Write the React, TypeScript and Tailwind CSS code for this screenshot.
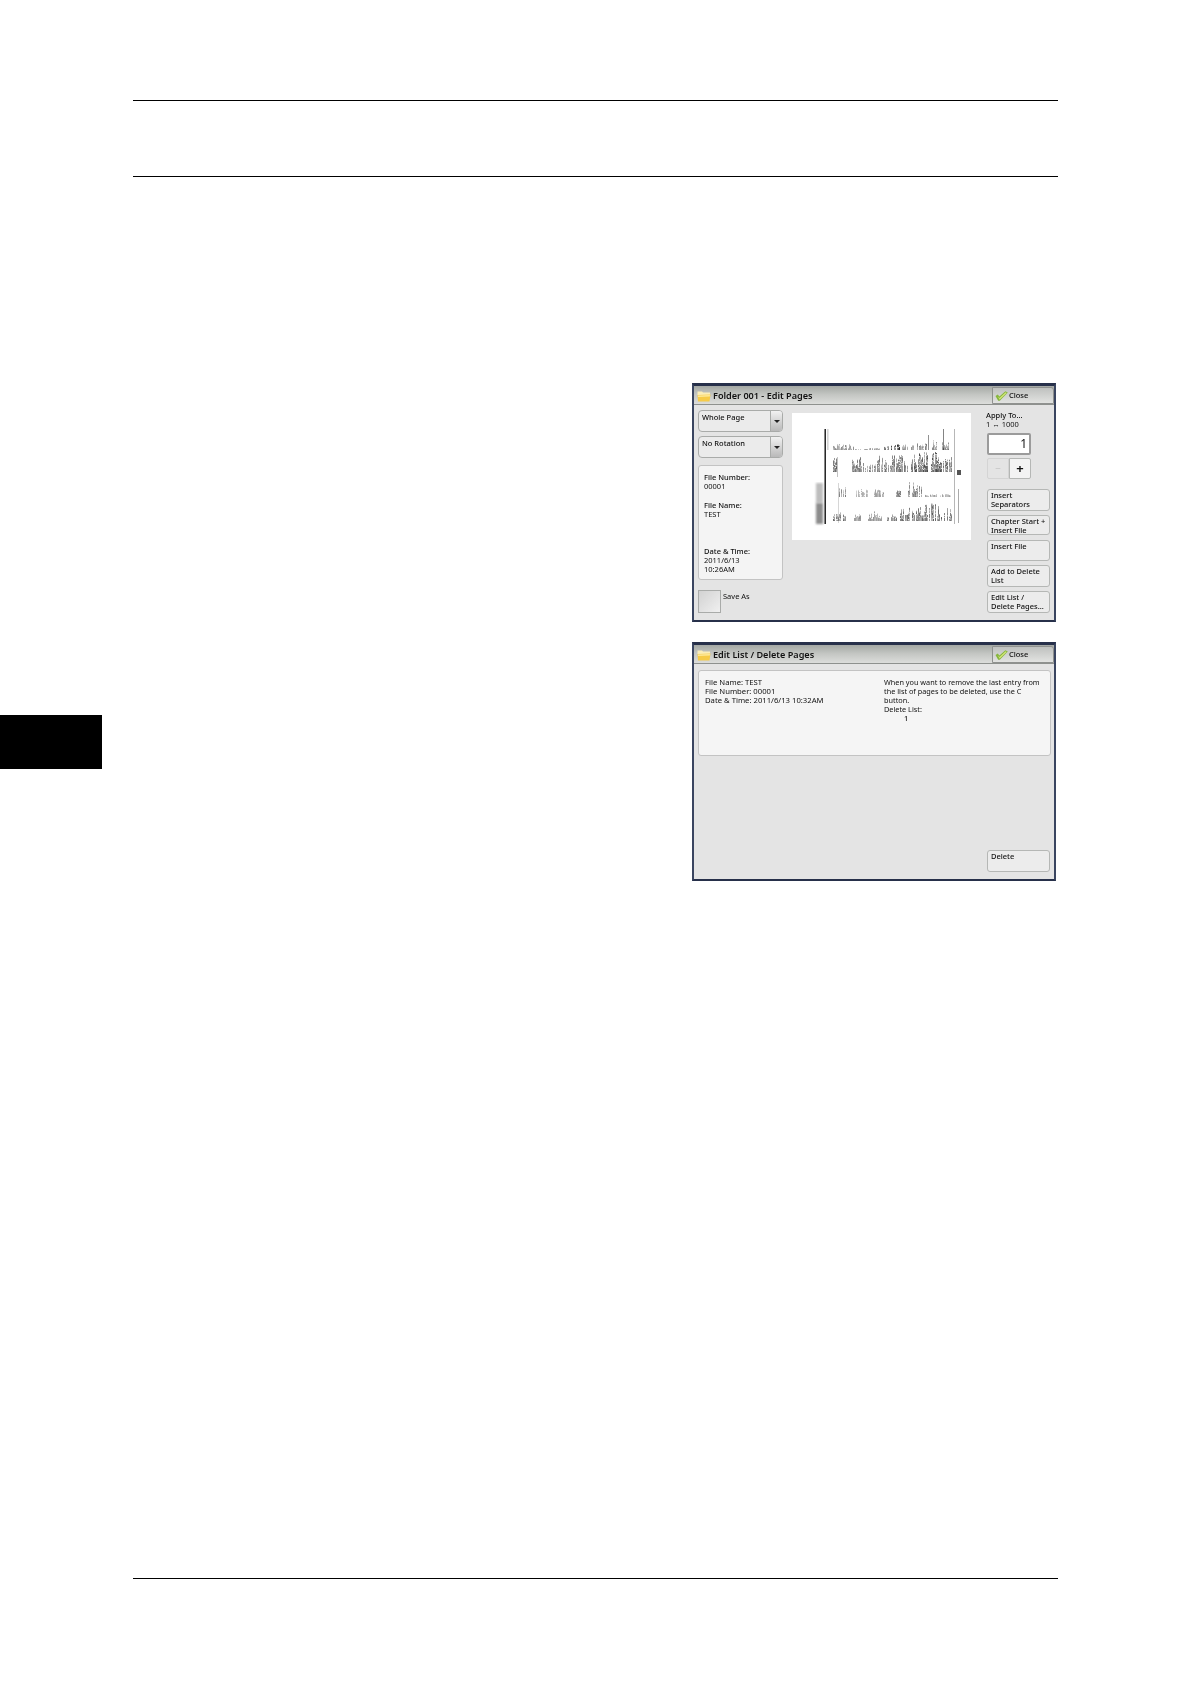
const font = "font-['Noto_Sans',sans-serif]";

function FolderIcon() {
  return (
    <svg width="14" height="11" viewBox="0 0 14 11" className="shrink-0">
      <path d="M0.5 2 L0.5 0.5 L5 0.5 L6 1.5 L13 1.5 L13 4 L0.5 4 Z" fill="#fbeeb8" />
      <path d="M0.5 4 L13.5 3.5 L12.5 10.5 L1 10.5 Z" fill="#f6cb48" />
      <path d="M1 4.5 L13 4 L12.8 5.5 L1 6 Z" fill="#fde99a" />
    </svg>
  );
}

function CheckIcon() {
  return (
    <svg width="13" height="10" viewBox="0 0 13 10" className="shrink-0">
      <path d="M0.5 5 L2.8 3.6 L4.4 5.4 L10.4 0.3 L12.8 1.6 L4.8 9.7 L3.2 9.7 Z" fill="#86b63c" />
      <path d="M2.6 5 L4.4 7 L10.6 1.3 L11.6 1.9 L4.6 8.8 Z" fill="#d2e57a" />
    </svg>
  );
}

function TitleBar({ title }: { title: string }) {
  return (
    <div className="flex h-[19px] items-start border-b border-[#8e918e] bg-gradient-to-b from-[#a4a8a4] via-[#c5c7c4] to-[#dcdddb]">
      <div className="ml-[3px] mt-[5px]">
        <FolderIcon />
      </div>
      <span className="ml-[2px] mt-[2px] text-[9.1px] font-semibold leading-[16px] text-[#111]">{title}</span>
      <div className="ml-auto mt-[1px] flex h-[17px] w-[62px] items-center rounded-tr-[3px] border border-[#8f918f] bg-gradient-to-b from-[#bfc1bf] to-[#e2e3e1] pl-[2px]">
        <CheckIcon />
        <span className="ml-[1px] text-[7.5px] font-medium text-[#111]">Close</span>
      </div>
    </div>
  );
}

function Dropdown({ label, className }: { label: string; className?: string }) {
  return (
    <div className={`flex h-[22px] w-[85px] overflow-hidden rounded-[4px] border border-[#a9aba9] bg-[#ebebeb] ${className ?? ""}`}>
      <span className="flex-1 pl-[3px] text-[7.5px] font-medium leading-[13px] text-[#111]">{label}</span>
      <div className="flex w-[12px] items-center justify-center border-l border-[#a9aba9] bg-gradient-to-b from-[#f2f2f2] to-[#b9b9b9]">
        <div className="h-0 w-0 border-x-[3px] border-t-[3px] border-x-transparent border-t-[#222]" />
      </div>
    </div>
  );
}

function SideButton({ lines, className }: { lines: string[]; className?: string }) {
  return (
    <div className={`w-[63px] rounded-[3px] border border-[#b5b7b5] bg-[#ececec] pl-[3px] pt-[1px] text-[7.5px] font-medium leading-[9px] text-[#111] ${className ?? ""}`}>
      {lines.map((line) => (
        <div key={line} className="whitespace-nowrap">
          {line}
        </div>
      ))}
    </div>
  );
}

// x0, x1, min height, max height, darkness
const rows: [number, [number, number, number, number, number][]][] = [
  [37, [[41, 62, 1, 7, 0.5], [62, 76, 1, 1, 0.4], [77, 88, 1, 2, 0.45], [92, 97, 2, 5, 0.6], [99, 108, 4, 6, 0.9], [110, 116, 2, 6, 0.5], [118, 122, 2, 5, 0.5], [125, 135, 2, 7, 0.55], [138, 146, 2, 12, 0.55], [150, 158, 2, 8, 0.6]]],
  [59, [[41, 46, 8, 15, 0.7], [60, 80, 4, 17, 0.6], [80, 100, 6, 18, 0.65], [100, 122, 6, 19, 0.65], [122, 150, 6, 20, 0.75], [150, 160, 8, 19, 0.65]]],
  [84, [[47, 55, 6, 14, 0.6], [64, 76, 4, 8, 0.35], [82, 92, 4, 8, 0.5], [102, 112, 3, 7, 0.6], [115, 130, 3, 15, 0.6], [133, 160, 1, 3, 0.4]]],
  [108, [[41, 55, 3, 9, 0.65], [62, 72, 2, 7, 0.5], [76, 90, 2, 10, 0.5], [95, 105, 3, 8, 0.6], [108, 132, 5, 15, 0.65], [132, 150, 4, 21, 0.7], [150, 160, 3, 13, 0.6]]],
];

function PreviewChart() {
  let seed = 17;
  const next = () => {
    seed = (seed * 1103515245 + 12345) & 0x7fffffff;
    return seed / 0x7fffffff;
  };
  const bars: { x: number; y: number; h: number; o: number }[] = [];
  rows.forEach(([base, clusters]) => {
    clusters.forEach(([x0, x1, minH, maxH, dark]) => {
      for (let x = x0; x < x1; x += 1) {
        if (next() < 0.25) continue;
        const total = minH + next() * (maxH - minH);
        // each column is broken into short dashes, like small print
        let y = base;
        while (y > base - total) {
          const h = Math.min(1 + next() * 3, y - (base - total));
          bars.push({ x, y: y - h, h, o: dark * (0.45 + next() * 0.55) });
          y -= h + (total > 4 && next() < 0.5 ? 0.8 : 0);
        }
      }
    });
  });
  return (
    <svg width="179" height="127" viewBox="0 0 179 127" className="block">
      <defs>
        <filter id="soft" x="-5%" y="-5%" width="110%" height="110%">
          <feGaussianBlur stdDeviation="0.3" />
        </filter>
        <filter id="softer" x="-30%" y="-5%" width="160%" height="110%">
          <feGaussianBlur stdDeviation="0.8" />
        </filter>
      </defs>
      <rect x="24" y="70" width="7" height="20" fill="#bdbdbd" filter="url(#softer)" />
      <rect x="24" y="90" width="7" height="21" fill="#8c8c8c" filter="url(#softer)" />
      <rect x="32.5" y="16" width="1.4" height="95" fill="#111" />
      <g filter="url(#soft)">
        <rect x="35.5" y="16" width="0.8" height="21" fill="#aaa" />
        <rect x="45" y="44" width="0.6" height="20" fill="#999" />
        <rect x="46" y="70" width="0.6" height="40" fill="#bbb" />
        <rect x="162" y="16" width="0.7" height="95" fill="#999" />
        <rect x="165" y="57" width="4" height="5" fill="#555" />
        <rect x="166" y="76" width="1" height="34" fill="#aaa" />
        <rect x="151" y="16" width="0.8" height="21" fill="#666" />
        <rect x="136" y="22" width="0.8" height="15" fill="#777" />
        {bars.map((b, i) => (
          <rect key={i} x={b.x} y={b.y} width="1" height={b.h} fill="#111" opacity={b.o} />
        ))}
      </g>
    </svg>
  );
}

function Window({ title, children }: { title: string; children: React.ReactNode }) {
  return (
    <div className="flex h-[239px] w-[364px] flex-col border-x-2 border-b-2 border-t-[3px] border-x-[#3a4560] border-b-[#27304a] border-t-[#27304a] bg-[#e4e4e4] blur-[0.25px]">
      <TitleBar title={title} />
      {children}
    </div>
  );
}

export default function App() {
  return (
    <div className={`flex h-[1684px] w-[1190px] bg-white ${font}`}>
      <div className="w-[102px] shrink-0 pt-[715px]">
        <div className="h-[54px] w-[102px] bg-black" />
      </div>

      <div className="ml-[31px] flex w-[925px] flex-col pt-[100px]">
        <div className="h-[76px] border-t border-black" />
        <div className="h-px bg-black" />

        <div className="ml-[559px] mt-[206px] flex w-[364px] flex-col gap-[20px]">
          <Window title="Folder 001 - Edit Pages">
            <div className="flex flex-1 pl-[4px] pt-[5px] text-[#111]">
              <div className="flex w-[85px] flex-col">
                <Dropdown label="Whole Page" />
                <Dropdown label="No Rotation" className="mt-[4px]" />
                <div className="mt-[7px] h-[115px] rounded-[3px] border border-[#c3c3c3] bg-[#f4f4f4] pl-[5px] pt-[7px] text-[7.5px] leading-[9.2px]">
                  <div className="font-medium">File Number:</div>
                  <div>00001</div>
                  <div className="mt-[9.2px] font-medium">File Name:</div>
                  <div>TEST</div>
                  <div className="mt-[27.6px] font-medium">Date &amp; Time:</div>
                  <div>2011/6/13</div>
                  <div>10:26AM</div>
                </div>
                <div className="mt-[10px] flex items-start">
                  <div className="h-[23px] w-[23px] border border-[#a9aba9] bg-gradient-to-br from-[#d2d2d2] to-[#f0f0f0]" />
                  <span className="ml-[2px] mt-[2px] text-[7.5px] leading-[9px]">Save As</span>
                </div>
              </div>

              <div className="ml-[9px] mt-[3px] h-[127px] w-[179px] bg-white">
                <PreviewChart />
              </div>

              <div className="ml-[16px] flex w-[64px] flex-col">
                <div className="-ml-px mt-[1px] text-[7.5px] font-medium leading-[9px]">
                  <div>Apply To...</div>
                  <div className="font-normal">1 ↔ 1000</div>
                </div>
                <div className="mt-[4px] flex h-[22px] w-[44px] items-center justify-end rounded-[2px] border-2 border-[#9b9b9b] bg-white pr-[2px] text-[12px] leading-none">
                  1
                </div>
                <div className="mt-[3px] flex h-[21px] w-[44px]">
                  <div className="flex w-[22px] items-center justify-center rounded-l-[2px] border border-[#d4d4d4] text-[10px] text-[#c4c4c4]">−</div>
                  <div className="flex w-[22px] items-center justify-center rounded-r-[2px] border border-[#b5b7b5] bg-[#f3f3f3] text-[13px] font-bold">+</div>
                </div>
                <SideButton lines={["Insert", "Separators"]} className="mt-[10px] h-[22px]" />
                <SideButton lines={["Chapter Start +", "Insert File"]} className="mt-[4px] h-[20px]" />
                <SideButton lines={["Insert File"]} className="mt-[5px] h-[21px]" />
                <SideButton lines={["Add to Delete", "List"]} className="mt-[4px] h-[22px]" />
                <SideButton lines={["Edit List /", "Delete Pages..."]} className="mt-[4px] h-[22px]" />
              </div>
            </div>
          </Window>

          <Window title="Edit List / Delete Pages">
            <div className="flex flex-1 flex-col pl-[4px] pr-[3px] pt-[6px] text-[#111]">
              <div className="flex h-[86px] rounded-[3px] border border-[#c3c3c3] bg-[#f5f5f5] pl-[6px] pt-[7px] leading-[9px]">
                <div className="w-[179px] text-[7.7px]">
                  <div>File Name: TEST</div>
                  <div>File Number: 00001</div>
                  <div>Date &amp; Time: 2011/6/13 10:32AM</div>
                </div>
                <div className="w-[160px] text-[7.3px]">
                  <div>When you want to remove the last entry from</div>
                  <div>the list of pages to be deleted, use the C</div>
                  <div>button.</div>
                  <div>Delete List:</div>
                  <div className="pl-[20px] font-medium">1</div>
                </div>
              </div>
              <div className="mt-auto mb-[7px] ml-[289px]">
                <SideButton lines={["Delete"]} className="h-[22px]" />
              </div>
            </div>
          </Window>
        </div>

        <div className="mt-auto mb-[105px] h-px bg-black" />
      </div>
    </div>
  );
}
